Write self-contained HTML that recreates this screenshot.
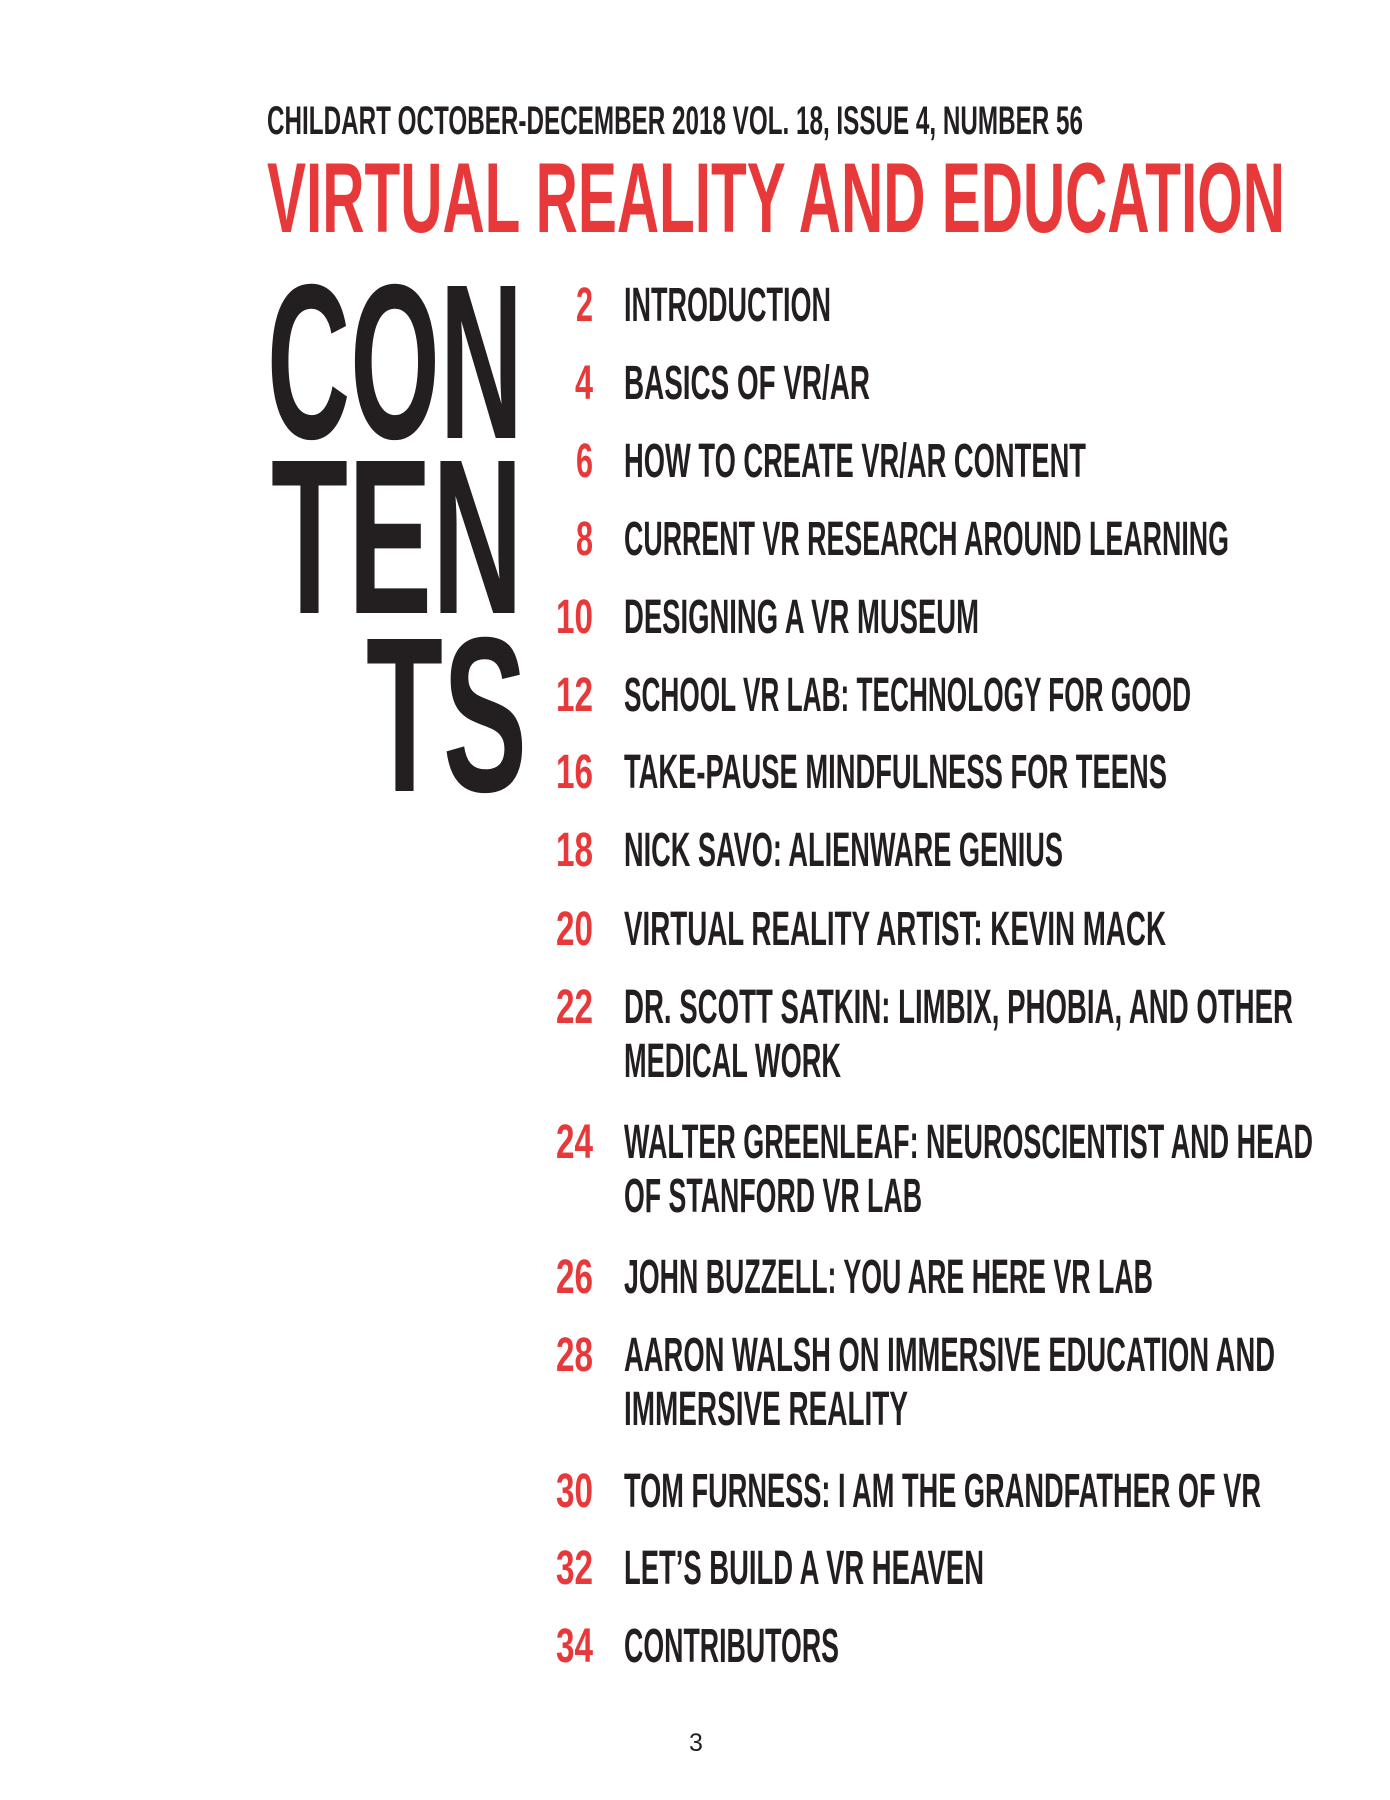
<!DOCTYPE html>
<html><head><meta charset="utf-8"><style>
html,body{margin:0;padding:0;background:#fff;width:1390px;height:1800px;overflow:hidden}
svg{display:block}
.b{font-family:"Liberation Sans",sans-serif;font-weight:bold;fill:#231f20}
.r{font-family:"Liberation Sans",sans-serif;font-weight:bold;fill:#e8393a}
</style></head><body>
<svg width="1390" height="1800" viewBox="0 0 1390 1800" xmlns="http://www.w3.org/2000/svg">
<text class="b" x="267" y="134" font-size="40" textLength="816" lengthAdjust="spacingAndGlyphs">CHILDART OCTOBER-DECEMBER 2018 VOL. 18, ISSUE 4, NUMBER 56</text>
<text class="r" x="267" y="232" font-size="99" textLength="1018" lengthAdjust="spacingAndGlyphs">VIRTUAL REALITY AND EDUCATION</text>
<text class="b" x="267" y="438" font-size="221" textLength="256" lengthAdjust="spacingAndGlyphs">CON</text>
<text class="b" x="271" y="613" font-size="221" textLength="252" lengthAdjust="spacingAndGlyphs">TEN</text>
<text class="b" x="366" y="791" font-size="221" textLength="161" lengthAdjust="spacingAndGlyphs">TS</text>
<g transform="translate(0,-3)">
<g font-size="48">
<text class="r" x="576" y="324" textLength="17" lengthAdjust="spacingAndGlyphs">2</text>
<text class="r" x="575" y="402" textLength="18" lengthAdjust="spacingAndGlyphs">4</text>
<text class="r" x="576" y="480" textLength="17" lengthAdjust="spacingAndGlyphs">6</text>
<text class="r" x="576" y="558" textLength="17" lengthAdjust="spacingAndGlyphs">8</text>
<text class="r" x="556" y="636" textLength="37" lengthAdjust="spacingAndGlyphs">10</text>
<text class="r" x="556" y="714" textLength="37" lengthAdjust="spacingAndGlyphs">12</text>
<text class="r" x="556" y="791" textLength="37" lengthAdjust="spacingAndGlyphs">16</text>
<text class="r" x="556" y="869" textLength="37" lengthAdjust="spacingAndGlyphs">18</text>
<text class="r" x="556" y="948" textLength="37" lengthAdjust="spacingAndGlyphs">20</text>
<text class="r" x="556" y="1026" textLength="37" lengthAdjust="spacingAndGlyphs">22</text>
<text class="r" x="556" y="1161" textLength="37" lengthAdjust="spacingAndGlyphs">24</text>
<text class="r" x="556" y="1296" textLength="37" lengthAdjust="spacingAndGlyphs">26</text>
<text class="r" x="556" y="1374" textLength="37" lengthAdjust="spacingAndGlyphs">28</text>
<text class="r" x="556" y="1510" textLength="37" lengthAdjust="spacingAndGlyphs">30</text>
<text class="r" x="556" y="1587" textLength="37" lengthAdjust="spacingAndGlyphs">32</text>
<text class="r" x="556" y="1665" textLength="37" lengthAdjust="spacingAndGlyphs">34</text>
</g>
<g font-size="48">
<text class="b" x="624" y="324" textLength="207" lengthAdjust="spacingAndGlyphs">INTRODUCTION</text>
<text class="b" x="624" y="402" textLength="246" lengthAdjust="spacingAndGlyphs">BASICS OF VR/AR</text>
<text class="b" x="624" y="480" textLength="462" lengthAdjust="spacingAndGlyphs">HOW TO CREATE VR/AR CONTENT</text>
<text class="b" x="624" y="558" textLength="605" lengthAdjust="spacingAndGlyphs">CURRENT VR RESEARCH AROUND LEARNING</text>
<text class="b" x="624" y="636" textLength="355" lengthAdjust="spacingAndGlyphs">DESIGNING A VR MUSEUM</text>
<text class="b" x="624" y="714" textLength="567" lengthAdjust="spacingAndGlyphs">SCHOOL VR LAB: TECHNOLOGY FOR GOOD</text>
<text class="b" x="624" y="791" textLength="543" lengthAdjust="spacingAndGlyphs">TAKE-PAUSE MINDFULNESS FOR TEENS</text>
<text class="b" x="624" y="869" textLength="439" lengthAdjust="spacingAndGlyphs">NICK SAVO: ALIENWARE GENIUS</text>
<text class="b" x="624" y="948" textLength="542" lengthAdjust="spacingAndGlyphs">VIRTUAL REALITY ARTIST: KEVIN MACK</text>
<text class="b" x="624" y="1026" textLength="669" lengthAdjust="spacingAndGlyphs">DR. SCOTT SATKIN: LIMBIX, PHOBIA, AND OTHER</text>
<text class="b" x="624" y="1080" textLength="217" lengthAdjust="spacingAndGlyphs">MEDICAL WORK</text>
<text class="b" x="624" y="1161" textLength="689" lengthAdjust="spacingAndGlyphs">WALTER GREENLEAF: NEUROSCIENTIST AND HEAD</text>
<text class="b" x="624" y="1215" textLength="298" lengthAdjust="spacingAndGlyphs">OF STANFORD VR LAB</text>
<text class="b" x="624" y="1296" textLength="529" lengthAdjust="spacingAndGlyphs">JOHN BUZZELL: YOU ARE HERE VR LAB</text>
<text class="b" x="624" y="1374" textLength="651" lengthAdjust="spacingAndGlyphs">AARON WALSH ON IMMERSIVE EDUCATION AND</text>
<text class="b" x="624" y="1428" textLength="284" lengthAdjust="spacingAndGlyphs">IMMERSIVE REALITY</text>
<text class="b" x="624" y="1510" textLength="637" lengthAdjust="spacingAndGlyphs">TOM FURNESS: I AM THE GRANDFATHER OF VR</text>
<text class="b" x="624" y="1587" textLength="360" lengthAdjust="spacingAndGlyphs">LET’S BUILD A VR HEAVEN</text>
<text class="b" x="624" y="1665" textLength="215" lengthAdjust="spacingAndGlyphs">CONTRIBUTORS</text>
</g>
</g>
<text x="696" y="1751" font-family="Liberation Sans, sans-serif" font-size="25" fill="#231f20" text-anchor="middle">3</text>
</svg>
</body></html>
